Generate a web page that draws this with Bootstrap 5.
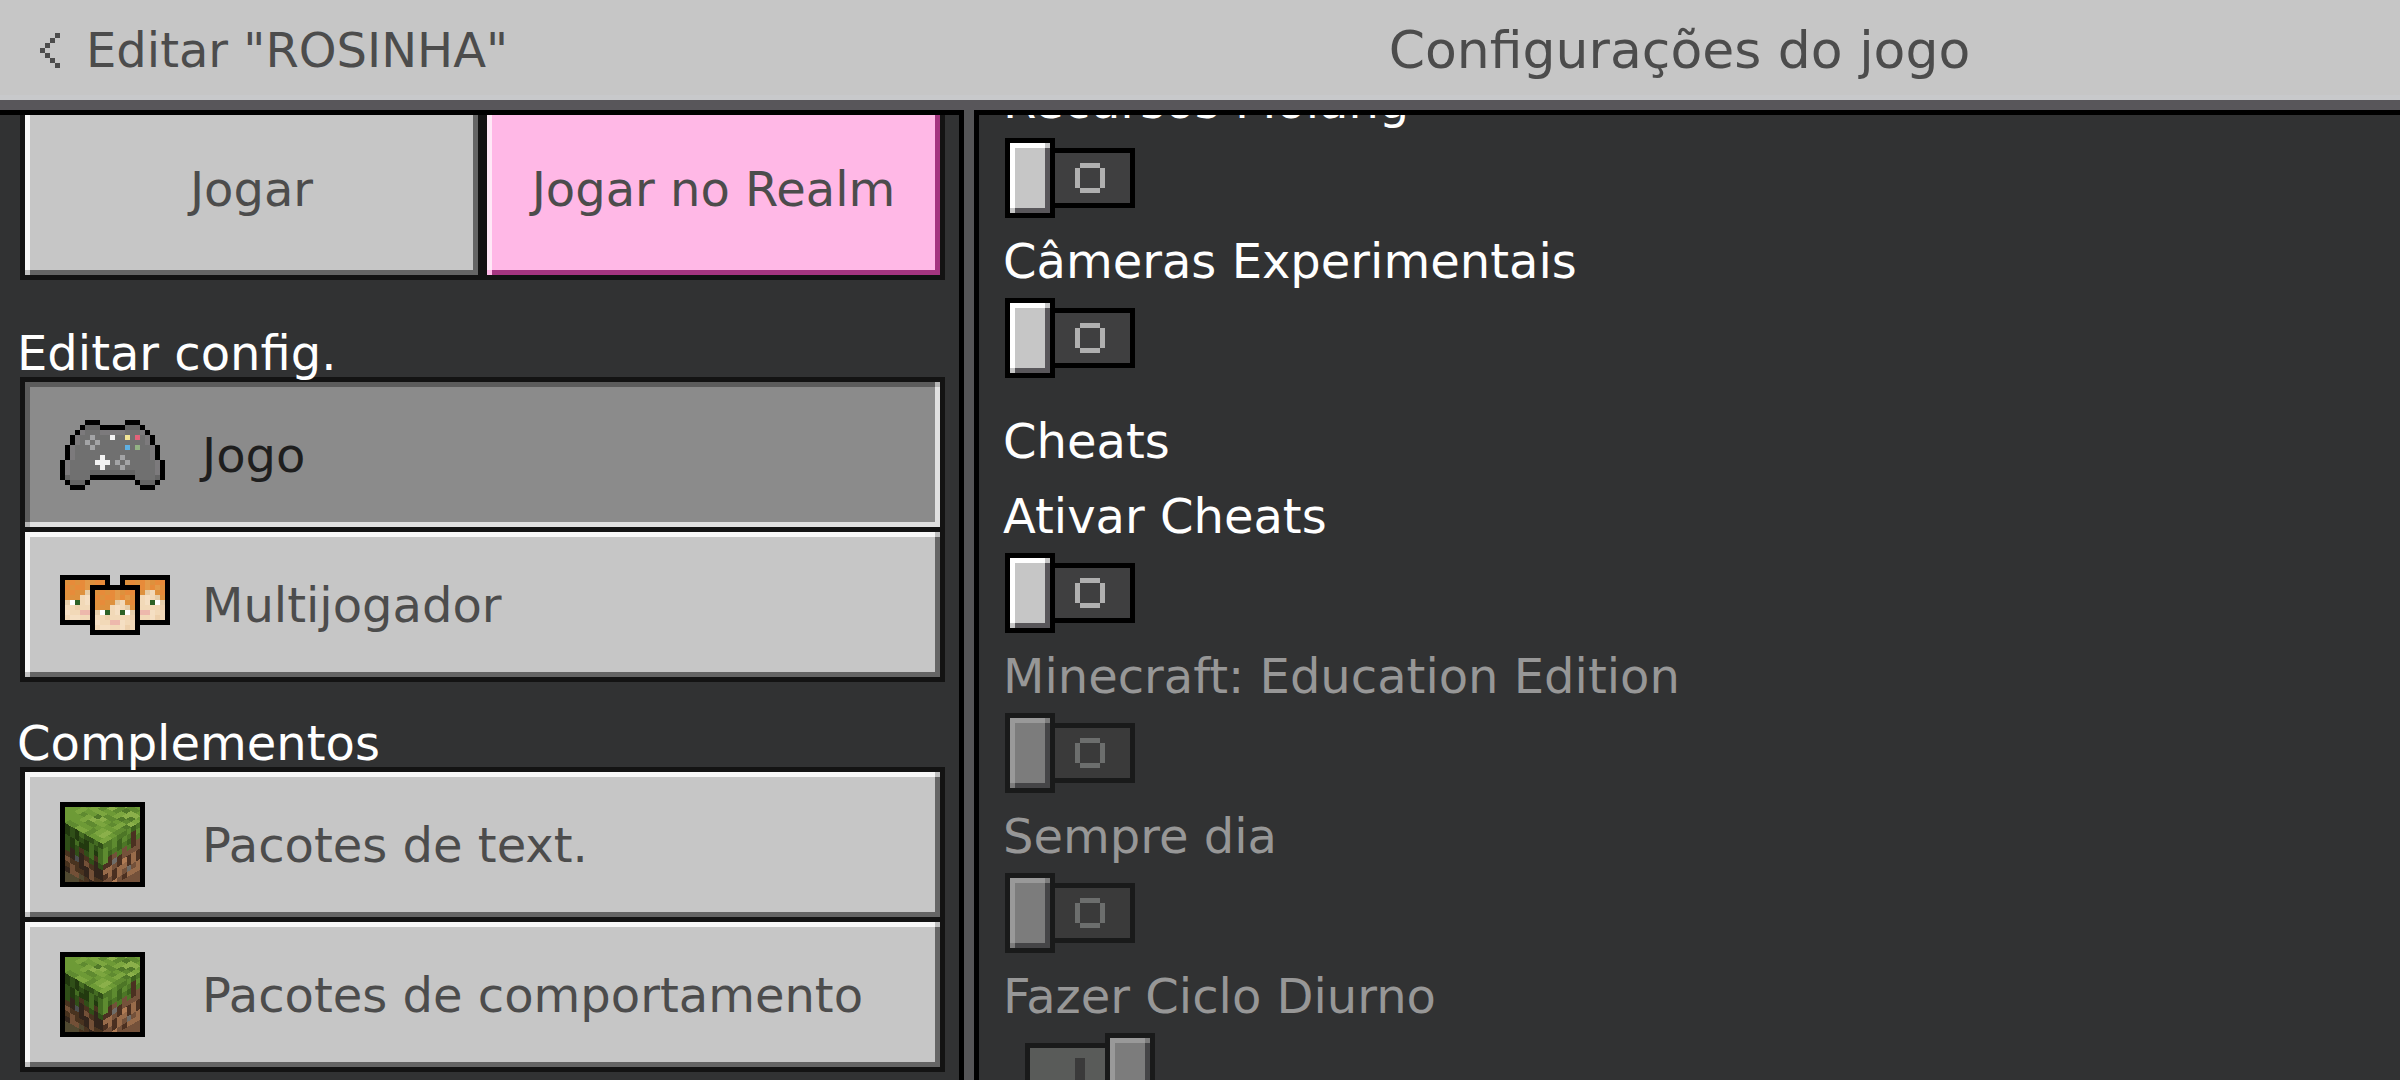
<!DOCTYPE html>
<html lang="pt-BR">
<head>
<meta charset="utf-8">
<meta name="viewport" content="width=device-width, initial-scale=1">
<title>Configurações do jogo</title>
<link rel="stylesheet" href="https://cdn.jsdelivr.net/npm/bootstrap@5.3.0/dist/css/bootstrap.min.css">
<style>
  body { background: #313233; color: #fff; font-family: "DejaVu Sans", sans-serif; font-size: 48px; line-height: 60px; }
  svg { shape-rendering: crispEdges; display: block; }

  /* header */
  .topbar { height: 110px; background: #c6c6c6; border-bottom: 10px solid #58565a; box-shadow: inset 0 -5px #c8c9cb; color: #4c4c4c; }
  .topbar-left { width: calc(40% - 1px); padding-left: 40px; }
  .back-btn { color: #4c4c4c; gap: 26px; font-size: inherit; line-height: inherit; }
  .topbar-title { font-size: 52px; }

  /* panes */
  .side-pane { width: calc(40% - 1px); padding: 0 14px 0 20px; border-top: 5px solid #000; }
  .pane-divider { width: 20px; background: #555557; border: solid #000; border-width: 0 5px; }
  .main-pane { padding: 0 26px; border-top: 5px solid #000; }

  /* bevelled buttons */
  .frame { background: #131313; padding: 5px; }
  .bevel {
    --hi: #f7f7f7; --face: #c6c6c6; --lo: #656565; --corner: #c0c0c0; --corner2: #c0c0c0;
    border: 0; border-radius: 0; padding: 0; color: #4c4c4c; font-size: 48px; line-height: 60px;
    background:
      linear-gradient(var(--corner), var(--corner)) 0 100% / 5px 5px no-repeat,
      linear-gradient(var(--corner2), var(--corner2)) 100% 0 / 5px 5px no-repeat,
      linear-gradient(var(--lo), var(--lo)) 0 100% / 100% 5px no-repeat,
      linear-gradient(var(--lo), var(--lo)) 100% 0 / 5px 100% no-repeat,
      linear-gradient(var(--hi), var(--hi)) 0 0 / 100% 5px no-repeat,
      linear-gradient(var(--hi), var(--hi)) 0 0 / 5px 100% no-repeat,
      var(--face);
  }
  .bevel-pink { --hi: #ffe8f7; --face: #ffb8e6; --lo: #a53580; --corner: #ffb8e6; --corner2: #ffb8e6; }
  .bevel-active { --hi: #5c5c5c; --face: #8b8b8b; --lo: #e0e0e0; --corner: #b5b5b5; --corner2: #b5b5b5; color: #1e1e1e; }
  .play-row { margin-top: -20px; margin-bottom: 12px; gap: 9px; }
  .play-row .bevel { height: 175px; padding-top: 3px; }
  .side-title { font-size: 48px; line-height: 48px; margin: 0 0 0 -3px; padding-top: 37px; font-weight: 400; }
  .side-list { gap: 5px; }
  .side-list .bevel { height: 145px; padding-left: 35px; text-align: left; }
  .side-icon { width: 142px; flex: none; }

  /* settings */
  .settings { margin-top: -44px; }
  .option { margin-bottom: 13px; }
  .option-name { display: block; margin: 0 0 7px -2px; }
  .group-title { font-size: 48px; line-height: 60px; font-weight: 400; margin: 33px 0 15px -2px; }
  .is-off-limits { color: #979797; }

  .mc-switch {
    --k: #000; --w: #fff; --b: #c6c6c6; --d: #58565a; --t: #3f3f40; --o: #b0b0b0;
    appearance: none; display: block; margin: 0; width: 130px; height: 80px;
    background:
      linear-gradient(var(--b), var(--b)) 10px 10px / 30px 60px,
      linear-gradient(var(--b), var(--b)) 40px 5px / 5px 5px,
      linear-gradient(var(--b), var(--b)) 5px 70px / 5px 5px,
      linear-gradient(var(--w), var(--w)) 5px 5px / 35px 5px,
      linear-gradient(var(--w), var(--w)) 5px 5px / 5px 65px,
      linear-gradient(var(--d), var(--d)) 10px 10px / 35px 65px,
      linear-gradient(var(--k), var(--k)) 0 0 / 50px 80px,
      linear-gradient(var(--t), var(--t)) 75px 30px / 20px 20px,
      linear-gradient(var(--o), var(--o)) 75px 25px / 20px 30px,
      linear-gradient(var(--o), var(--o)) 70px 30px / 30px 20px,
      linear-gradient(var(--t), var(--t)) 50px 15px / 75px 50px,
      linear-gradient(var(--k), var(--k)) 50px 10px / 80px 60px;
    background-repeat: no-repeat;
  }
  .mc-switch:disabled { --k: #191a1a; --w: #999; --b: #7c7c7c; --d: #454547; --t: #3a3a3a; --o: #6c6e6d; }
  .mc-switch:checked {
    --t: #595b59; --o: #3a3a3a; width: 150px;
    background:
      linear-gradient(var(--b), var(--b)) 110px 10px / 30px 60px,
      linear-gradient(var(--b), var(--b)) 140px 5px / 5px 5px,
      linear-gradient(var(--b), var(--b)) 105px 70px / 5px 5px,
      linear-gradient(var(--w), var(--w)) 105px 5px / 35px 5px,
      linear-gradient(var(--w), var(--w)) 105px 5px / 5px 65px,
      linear-gradient(var(--d), var(--d)) 110px 10px / 35px 65px,
      linear-gradient(var(--k), var(--k)) 100px 0 / 50px 80px,
      linear-gradient(var(--o), var(--o)) 70px 25px / 10px 30px,
      linear-gradient(var(--t), var(--t)) 25px 15px / 75px 50px,
      linear-gradient(var(--k), var(--k)) 20px 10px / 80px 60px;
    background-repeat: no-repeat;
  }
</style>
</head>
<body>
<svg width="0" height="0" class="position-absolute" aria-hidden="true">
  <defs>
    <symbol id="face" viewBox="0 0 10 10">
      <path fill="#000" d="M0 0h10v10H0z"/>
      <path fill="#f2d9b8" d="M1 1h8v8H1z"/>
      <path fill="#de913d" d="M1 1h8v2H1zM1 3h4v1H1zM1 4h3v1H1zM7 3h2v1H7zM8 4h1v1H8z"/>
      <path fill="#e78b3a" d="M2 1h1v1H2zM4 1h1v2H4zM7 1h2v1H7zM1 2h1v1H1zM3 2h1v1H3zM2 3h1v1H2zM6 2h1v1H6zM8 3h1v1H8z"/>
      <path fill="#e39a49" d="M5 1h1v1H5zM5 2h1v1H5zM7 2h1v1H7z"/>
      <path fill="#e6cda8" d="M5 3h1v1H5zM7 4h1v1H7zM1 5h1v1H1zM8 5h1v1H8z"/>
      <path fill="#f5dfc3" d="M5 4h1v2H5zM1 7h1v1H1zM2 8h2v1H2zM6 7h1v2H6z"/>
      <path fill="#edd0ac" d="M3 6h1v1H3zM8 6h1v1H8zM7 8h1v1H7z"/>
      <path fill="#fff" d="M2 5h1v1H2zM7 5h1v1H7z"/>
      <path fill="#2c6127" d="M3 5h1v1H3zM6 5h1v1H6z"/>
      <path fill="#edb8ac" d="M4 7h2v1H4z"/>
    </symbol>
    <symbol id="block" viewBox="0 0 85 85">
      <path fill="#000" d="M0 0h85v85H0z"/>
      <svg x="5" y="5" width="75" height="75" viewBox="0 0 75 75">
        <path fill="#6d9a36" d="M0 0h75v75H0z"/>
        <g transform="matrix(-4.75 -2.65 4.7 -2.8 38 37)">
          <path fill="#7ca63f" d="M0 0h1v2H0zM2 1h1v2H2zM4 0h2v1H4zM3 3h2v1H3zM6 2h1v2H6zM1 4h1v2H1zM5 5h2v1H5zM3 6h1v2H3zM0 7h2v1H0zM7 5h1v2H7zM8 3h1v2H8zM6 8h2v1H6z"/>
          <path fill="#8bb04a" d="M1 1h1v1H1zM1 2h1v1H1zM4 4h1v1H4zM5 3h1v1H5zM0 6h1v1H0zM2 7h1v1H2zM5 7h1v1H5zM4 9h1v1H4zM1 8h2v1H1z"/>
          <path fill="#5f8a30" d="M3 0h1v2H3zM0 3h1v2H0zM2 4h1v1H2zM4 2h2v1H4zM6 0h2v1H6zM3 5h2v1H3zM1 6h1v1H1zM6 6h1v2H6zM4 7h1v2H4zM7 3h1v1H7zM2 9h2v1H2zM8 7h2v1H8z"/>
          <path fill="#507829" d="M2 6h1v1H2zM0 5h1v1H0zM3 8h1v1H3zM1 7h1v1H1zM5 4h1v1H5z"/>
        </g>
        <g transform="matrix(4.75 2.65 0 5.3 0 16)">
          <path fill="#49331f" d="M0 0h8v12H0z"/>
          <path fill="#33251c" d="M1 4h1v2H1zM3 4h1v3H3zM6 4h1v3H6zM4 6h1v2H4zM0 8h1v2H0zM7 5h1v2H7zM5 8h1v2H5z"/>
          <path fill="#735037" d="M1 7h1v2H1zM2 8h1v1H2zM4 5h1v1H4zM5 6h1v2H5zM0 6h1v1H0zM6 8h1v1H6z"/>
          <path fill="#504830" d="M0 9h2v2H0zM2 9h1v1H2zM3 8h1v1H3z"/>
          <path fill="#4b4f50" d="M2 5h1v1H2z"/>
          <path fill="#304f18" d="M0 0h8v3H0zM0 3h1v2H0zM2 3h1v2H2zM4 3h1v1H4zM5 3h1v2H5zM7 3h1v2H7z"/>
          <path fill="#22390f" d="M0 0h1v2H0zM2 0h1v2H2zM1 2h1v2H1zM3 2h1v1H3zM4 1h1v2H4zM6 2h1v1H6z"/>
          <path fill="#446c22" d="M3 0h1v1H3zM5 1h1v3H5zM7 1h1v3H7zM6 0h1v1H6zM2 2h1v1H2z"/>
        </g>
        <g transform="matrix(4.7 -2.8 0 5.3 38 37)">
          <path fill="#74513a" d="M0 0h8v14H0z"/>
          <path fill="#4b3021" d="M1 3h1v2H1zM0 4h1v1H0zM3 4h1v2H3zM6 1h1v3H6zM5 5h1v2H5zM2 6h1v2H2zM7 5h1v2H7zM4 8h1v1H4zM0 6h1v1H0z"/>
          <path fill="#986b4a" d="M1 5h1v2H1zM3 6h2v1H3zM6 5h1v2H6zM0 5h1v1H0zM5 8h2v1H5zM7 7h1v2H7zM3 7h1v1H3z"/>
          <path fill="#b07c55" d="M4 5h1v1H4zM2 8h1v1H2z"/>
          <path fill="#6f6c68" d="M2 4h1v1H2zM5 7h1v1H5z"/>
          <path fill="#4d7626" d="M0 0h6v3H0zM6 0h2v1H6zM0 3h1v1H0zM3 3h1v1H3zM5 3h1v1H5zM7 1h1v2H7z"/>
          <path fill="#5e8b30" d="M0 1h1v3H0zM2 0h1v2H2zM4 1h1v1H4zM5 0h1v1H5zM7 1h1v1H7z"/>
          <path fill="#3c611e" d="M1 2h1v1H1zM3 1h1v2H3zM5 2h1v1H5zM6 0h1v1H6z"/>
        </g>
      </svg>
    </symbol>
  </defs>
</svg>

<div class="vh-100 d-flex flex-column overflow-hidden">
  <header class="topbar d-flex align-items-center flex-shrink-0">
    <div class="topbar-left">
      <button type="button" class="back-btn btn p-0 border-0 d-flex align-items-center">
        <svg width="20" height="35" viewBox="0 0 4 7" fill="#4c4c4c" aria-hidden="true"><path d="M3 0h1v1H3zM2 1h1v1H2zM1 2h1v1H1zM0 3h1v1H0zM1 4h1v1H1zM2 5h1v1H2zM3 6h1v1H3z"/></svg>
        <span>Editar "ROSINHA"</span>
      </button>
    </div>
    <div class="topbar-title flex-fill text-center">Configurações do jogo</div>
  </header>

  <div class="d-flex flex-fill overflow-hidden">
    <nav class="side-pane flex-shrink-0 overflow-hidden">
      <div class="play-row frame d-flex">
        <button type="button" class="bevel btn w-50">Jogar</button>
        <button type="button" class="bevel bevel-pink btn w-50">Jogar no Realm</button>
      </div>

      <h2 class="side-title">Editar config.</h2>
      <div class="side-list frame d-flex flex-column">
        <button type="button" class="bevel bevel-active btn d-flex align-items-center">
          <span class="side-icon">
            <svg width="105" height="70" viewBox="0 0 21 14" aria-hidden="true">
              <path fill="#707070" d="M5 1h3v1h5V1h3v1h1v1h1v2h1v3h1v4h-1v1h-3v-1h-1v-1H6v1H5v1H2v-1H1V8h1V5h1V3h1V2h1z"/>
              <path fill="#7c7a7c" d="M4 2h1v1H4zM3 3h1v2H3zM2 5h1v3H2zM16 2h1v1h-1zM17 3h1v2h-1zM18 5h1v3h-1zM8 2h5v1H8zM1 8h1v3H1zM19 8h1v3h-1z"/>
              <path fill="#656565" d="M5 1h3v1H5zM13 1h3v1h-3zM6 10h9v1H6zM2 12h3v1H2zM16 12h3v1h-3zM1 11h1v1H1zM19 11h1v1h-1z"/>
              <path fill="#000" d="M5 0h3v1H5zM13 0h3v1h-3zM4 1h1v1H4zM8 1h5v1H8zM16 1h1v1h-1zM3 2h1v1H3zM17 2h1v1h-1zM2 3h1v2H2zM18 3h1v2h-1zM1 5h1v3H1zM19 5h1v3h-1zM0 8h1v4H0zM20 8h1v4h-1zM6 11h9v1H6zM1 12h1v1H1zM5 12h1v1H5zM15 12h1v1h-1zM19 12h1v1h-1zM2 13h3v1H2zM16 13h3v1h-3z"/>
              <path fill="#a3a4a6" d="M6 3h1v1H6zM5 4h1v1H5zM7 4h1v1H7zM6 5h1v1H6zM12 7h1v1h-1zM11 8h1v1h-1zM13 8h1v1h-1zM12 9h1v1h-1z"/>
              <path fill="#f4f4f4" d="M10 3h1v1h-1zM8 7h1v1h1v1H9v1H8V9H7V8h1z"/>
              <path fill="#f2e596" d="M13 3h1v1h-1z"/><path fill="#e2637a" d="M15 3h1v1h-1z"/>
              <path fill="#5fb0e2" d="M13 5h1v1h-1z"/><path fill="#93b384" d="M15 5h1v1h-1z"/>
            </svg>
          </span>
          <span>Jogo</span>
        </button>
        <button type="button" class="bevel btn d-flex align-items-center">
          <span class="side-icon">
            <svg width="110" height="60" viewBox="0 0 22 12" aria-hidden="true">
              <use href="#face" x="0" y="0" width="10" height="10"/>
              <use href="#face" x="12" y="0" width="10" height="10"/>
              <use href="#face" x="6" y="2" width="10" height="10"/>
            </svg>
          </span>
          <span>Multijogador</span>
        </button>
      </div>

      <h2 class="side-title">Complementos</h2>
      <div class="side-list frame d-flex flex-column">
        <button type="button" class="bevel btn d-flex align-items-center">
          <span class="side-icon"><svg width="85" height="85" aria-hidden="true"><use href="#block"/></svg></span>
          <span>Pacotes de text.</span>
        </button>
        <button type="button" class="bevel btn d-flex align-items-center">
          <span class="side-icon"><svg width="85" height="85" aria-hidden="true"><use href="#block"/></svg></span>
          <span>Pacotes de comportamento</span>
        </button>
      </div>
    </nav>

    <div class="pane-divider flex-shrink-0"></div>

    <main class="main-pane flex-fill overflow-hidden">
      <div class="settings">
        <div class="option">
          <label class="option-name" for="opt-molang">Recursos Molang</label>
          <input class="mc-switch" type="checkbox" role="switch" id="opt-molang">
        </div>
        <div class="option">
          <label class="option-name" for="opt-cameras">Câmeras Experimentais</label>
          <input class="mc-switch" type="checkbox" role="switch" id="opt-cameras">
        </div>
        <h2 class="group-title">Cheats</h2>
        <div class="option">
          <label class="option-name" for="opt-cheats">Ativar Cheats</label>
          <input class="mc-switch" type="checkbox" role="switch" id="opt-cheats">
        </div>
        <div class="option is-off-limits">
          <label class="option-name" for="opt-edu">Minecraft: Education Edition</label>
          <input class="mc-switch" type="checkbox" role="switch" id="opt-edu" disabled>
        </div>
        <div class="option is-off-limits">
          <label class="option-name" for="opt-day">Sempre dia</label>
          <input class="mc-switch" type="checkbox" role="switch" id="opt-day" disabled>
        </div>
        <div class="option is-off-limits">
          <label class="option-name" for="opt-cycle">Fazer Ciclo Diurno</label>
          <input class="mc-switch" type="checkbox" role="switch" id="opt-cycle" checked disabled>
        </div>
      </div>
    </main>
  </div>
</div>
<script src="https://cdn.jsdelivr.net/npm/bootstrap@5.3.0/dist/js/bootstrap.bundle.min.js"></script>
</body>
</html>
